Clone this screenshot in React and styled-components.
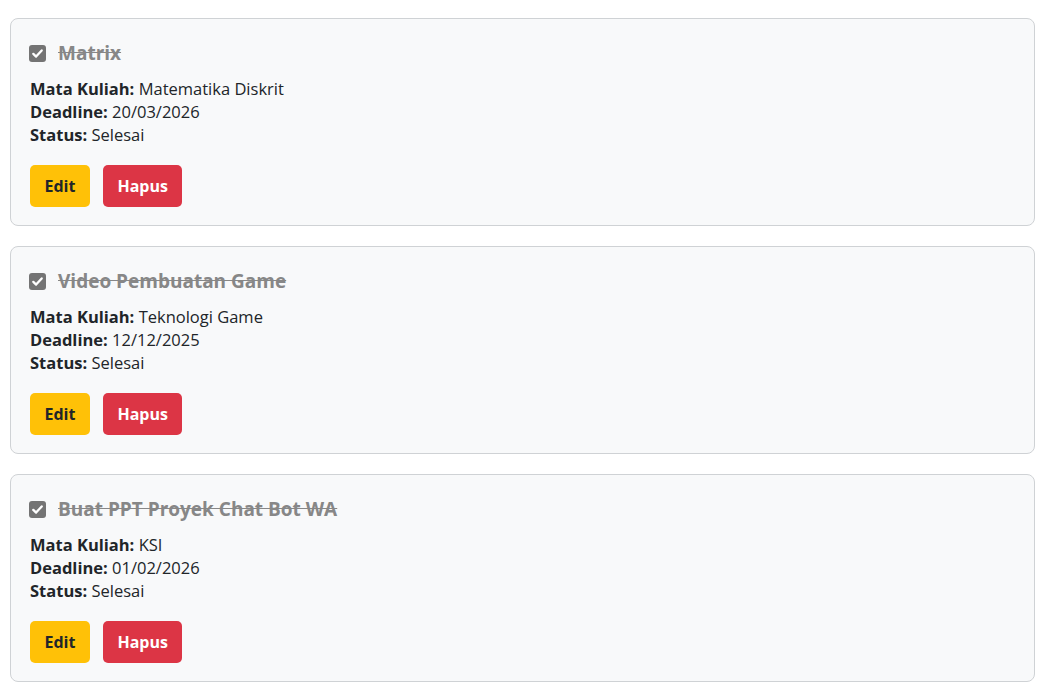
import React from "react";
import styled, { createGlobalStyle } from "styled-components";

const Global = createGlobalStyle`
  html, body { margin: 0; padding: 0; background: #ffffff; }
  body { font-family: "Open Sans", "Noto Sans", sans-serif; color: #212529; }
`;

const List = styled.div`
  display: flex;
  flex-direction: column;
  gap: 20px;
  padding: 18px 16px 18px 10px;
`;

const Card = styled.div`
  background: #f8f9fa;
  border: 1px solid #cfd2d5;
  border-radius: 8px;
  padding: 19px 19px 18px 19px;
  display: flex;
  flex-direction: column;
`;

const TitleRow = styled.div`
  display: flex;
  align-items: center;
  height: 30px;
  gap: 12px;
  margin-bottom: 10px;
`;

const Check = styled.span`
  width: 17px;
  height: 17px;
  margin-left: -1px;
  border-radius: 3px;
  background: #747474;
  display: inline-flex;
  align-items: center;
  justify-content: center;
  flex: none;
`;

const Title = styled.h3`
  margin: 0;
  font-size: 19px;
  font-weight: 700;
  color: #878787;
  text-decoration: line-through;
`;

const Info = styled.div`
  font-size: 16.5px;
  line-height: 23px;
  margin-top: -1px;
`;

const Line = styled.div`
  b { font-weight: 700; }
`;

const Actions = styled.div`
  display: flex;
  gap: 13px;
  margin-top: 19px;
`;

const Button = styled.button`
  height: 42px;
  padding: 0 14.5px;
  border: none;
  border-radius: 5px;
  font-family: inherit;
  font-size: 16px;
  font-weight: 700;
  cursor: pointer;
  background: ${(p) => (p.$variant === "danger" ? "#dc3545" : "#ffc107")};
  color: ${(p) => (p.$variant === "danger" ? "#ffffff" : "#212529")};
`;

const tasks = [
  { title: "Matrix", course: "Matematika Diskrit", deadline: "20/03/2026", status: "Selesai" },
  { title: "Video Pembuatan Game", course: "Teknologi Game", deadline: "12/12/2025", status: "Selesai" },
  { title: "Buat PPT Proyek Chat Bot WA", course: "KSI", deadline: "01/02/2026", status: "Selesai" },
];

function CheckIcon() {
  return (
    <svg width="13" height="13" viewBox="0 0 13 13">
      <path d="M2.3 6.9 L5.1 9.6 L10.7 3.4" fill="none" stroke="#ffffff" strokeWidth="2.3" strokeLinecap="round" strokeLinejoin="round" />
    </svg>
  );
}

export default function App() {
  return (
    <>
      <Global />
      <List>
        {tasks.map((t) => (
          <Card key={t.title}>
            <TitleRow>
              <Check role="checkbox" aria-checked="true"><CheckIcon /></Check>
              <Title>{t.title}</Title>
            </TitleRow>
            <Info>
              <Line><b>Mata Kuliah:</b> {t.course}</Line>
              <Line><b>Deadline:</b> {t.deadline}</Line>
              <Line><b>Status:</b> {t.status}</Line>
            </Info>
            <Actions>
              <Button>Edit</Button>
              <Button $variant="danger">Hapus</Button>
            </Actions>
          </Card>
        ))}
      </List>
    </>
  );
}
